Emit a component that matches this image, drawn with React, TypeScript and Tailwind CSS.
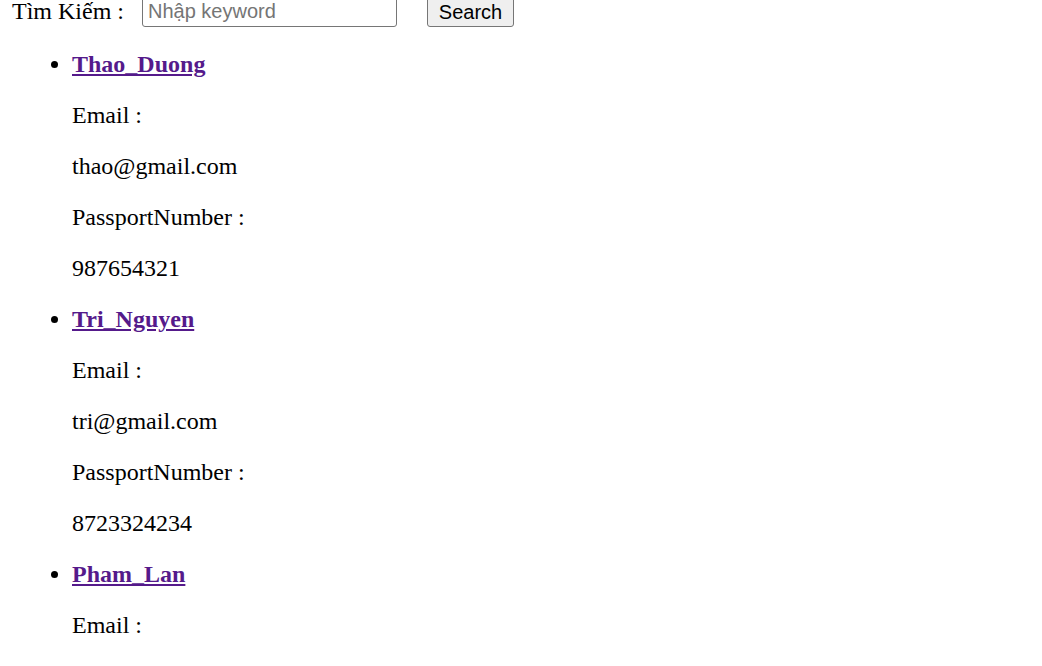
import React from "react";

const users = [
  { name: "Thao_Duong", email: "thao@gmail.com", passport: "987654321" },
  { name: "Tri_Nguyen", email: "tri@gmail.com", passport: "8723324234" },
  { name: "Pham_Lan", email: "lan@gmail.com", passport: "123456789" },
];

const App = () => {
  return (
    <div className="px-[12px] mt-[-5px] text-[24px] leading-[27px] text-black font-['Liberation_Serif','Times_New_Roman',serif]">
      {/* search form */}
      <div className="flex items-center h-[32px]">
        <span className="whitespace-nowrap">Tìm Kiếm :</span>
        <input
          type="text"
          placeholder="Nhập keyword"
          className="ml-[18px] w-[255px] h-[32px] px-[5px] border border-[#767676] rounded-[3px] text-[20px] font-['Liberation_Sans',Arial,sans-serif] placeholder:text-[#757575] outline-none"
        />
        <button className="ml-[30px] h-[31px] w-[87px] bg-[#efefef] border border-[#767676] rounded-[3px] text-[20px] leading-[22px] pt-[1px] font-['Liberation_Sans',Arial,sans-serif] text-black">
          Search
        </button>
      </div>

      {/* user list */}
      <ul className="mt-[24px] pl-[60px] list-disc flex flex-col gap-[24px]">
        {users.map((u) => (
          <li key={u.name} className="list-item">
            <div className="flex flex-col gap-[24px]">
              <a href="#" className="font-bold underline text-[#551a8b] self-start">
                {u.name}
              </a>
              <p>Email :</p>
              <p>{u.email}</p>
              <p>PassportNumber :</p>
              <p>{u.passport}</p>
            </div>
          </li>
        ))}
      </ul>
    </div>
  );
};

export default App;
